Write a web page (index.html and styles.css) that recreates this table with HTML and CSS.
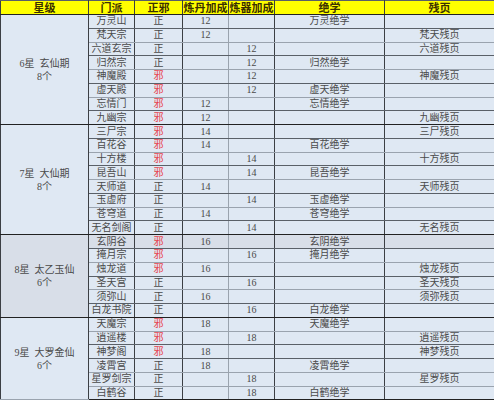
FILE: index.html
```html
<!DOCTYPE html>
<html>
<head>
<meta charset="utf-8">
<link rel="stylesheet" href="styles.css">
</head>
<body>
<table class="tbl">
  <colgroup>
    <col class="c1"><col class="c2"><col class="c3"><col class="c4"><col class="c5"><col class="c6"><col class="c7">
  </colgroup>
  <thead>
    <tr class="head"><th>星级</th><th>门派</th><th>正邪</th><th>炼丹加成</th><th>炼器加成</th><th>绝学</th><th>残页</th></tr>
  </thead>
  <tbody class="grp6">
    <tr><td class="grp" rowspan="8">6星&nbsp;&nbsp;玄仙期<br>8个</td><td>万灵山</td><td>正</td><td class="dan">12</td><td></td><td>万灵绝学</td><td></td></tr>
    <tr class="lt"><td>梵天宗</td><td>正</td><td class="dan">12</td><td></td><td></td><td>梵天残页</td></tr>
    <tr><td>六道玄宗</td><td>正</td><td class="dan"></td><td>12</td><td></td><td>六道残页</td></tr>
    <tr class="lt"><td>归然宗</td><td>正</td><td class="dan"></td><td>12</td><td>归然绝学</td><td></td></tr>
    <tr><td>神魔殿</td><td class="xie">邪</td><td class="dan"></td><td>12</td><td></td><td>神魔残页</td></tr>
    <tr class="lt"><td>虚天殿</td><td class="xie">邪</td><td class="dan"></td><td>12</td><td>虚天绝学</td><td></td></tr>
    <tr><td>忘情门</td><td class="xie">邪</td><td class="dan">12</td><td></td><td>忘情绝学</td><td></td></tr>
    <tr class="end"><td>九幽宗</td><td class="xie">邪</td><td class="dan">12</td><td></td><td></td><td>九幽残页</td></tr>
  </tbody>
  <tbody class="grp7">
    <tr><td class="grp" rowspan="8">7星&nbsp;&nbsp;大仙期<br>8个</td><td>三尸宗</td><td class="xie">邪</td><td class="dan">14</td><td></td><td></td><td>三尸残页</td></tr>
    <tr class="lt"><td>百花谷</td><td class="xie">邪</td><td class="dan">14</td><td></td><td>百花绝学</td><td></td></tr>
    <tr><td>十方楼</td><td class="xie">邪</td><td class="dan"></td><td>14</td><td></td><td>十方残页</td></tr>
    <tr class="lt"><td>昆吾山</td><td class="xie">邪</td><td class="dan"></td><td>14</td><td>昆吾绝学</td><td></td></tr>
    <tr><td>天师道</td><td>正</td><td class="dan">14</td><td></td><td></td><td>天师残页</td></tr>
    <tr class="lt"><td>玉虚府</td><td>正</td><td class="dan"></td><td>14</td><td>玉虚绝学</td><td></td></tr>
    <tr><td>苍穹道</td><td>正</td><td class="dan">14</td><td></td><td>苍穹绝学</td><td></td></tr>
    <tr class="end"><td>无名剑阁</td><td>正</td><td class="dan"></td><td>14</td><td></td><td>无名残页</td></tr>
  </tbody>
  <tbody class="grp8">
    <tr class="gray"><td class="grp" rowspan="6">8星&nbsp;&nbsp;太乙玉仙<br>6个</td><td>玄阴谷</td><td class="xie">邪</td><td class="dan">16</td><td></td><td>玄阴绝学</td><td></td></tr>
    <tr class="lt"><td>掩月宗</td><td class="xie">邪</td><td class="dan"></td><td>16</td><td>掩月绝学</td><td></td></tr>
    <tr><td>烛龙道</td><td class="xie">邪</td><td class="dan">16</td><td></td><td></td><td>烛龙残页</td></tr>
    <tr class="lt"><td>圣天宫</td><td>正</td><td class="dan"></td><td>16</td><td></td><td>圣天残页</td></tr>
    <tr><td>须弥山</td><td>正</td><td class="dan">16</td><td></td><td></td><td>须弥残页</td></tr>
    <tr class="end"><td>白龙书院</td><td>正</td><td class="dan"></td><td>16</td><td>白龙绝学</td><td></td></tr>
  </tbody>
  <tbody class="grp9">
    <tr class="lt"><td class="grp" rowspan="6">9星&nbsp;&nbsp;大罗金仙<br>6个</td><td>天魔宗</td><td class="xie">邪</td><td class="dan">18</td><td></td><td>天魔绝学</td><td></td></tr>
    <tr><td>逍遥楼</td><td class="xie">邪</td><td class="dan"></td><td>18</td><td></td><td>逍遥残页</td></tr>
    <tr><td>神梦阁</td><td class="xie">邪</td><td class="dan">18</td><td></td><td></td><td>神梦残页</td></tr>
    <tr class="lt"><td>凌霄宫</td><td>正</td><td class="dan">18</td><td></td><td>凌霄绝学</td><td></td></tr>
    <tr class="lt"><td>星罗剑宗</td><td>正</td><td class="dan"></td><td>18</td><td></td><td>星罗残页</td></tr>
    <tr class="end"><td>白鹤谷</td><td>正</td><td class="dan"></td><td>18</td><td>白鹤绝学</td><td></td></tr>
  </tbody>
</table>
</body>
</html>
```
FILE: styles.css
```css
html, body {
  margin: 0;
  padding: 0;
  background: #ffffff;
}
.tbl {
  width: 494px;
  height: 400px;
  table-layout: fixed;
  border-collapse: collapse;
  font-family: "Liberation Serif", "Noto Sans CJK SC", serif;
  font-size: 10px;
  color: #4a4a4a;
  background: #dfe8f3;
}
.c1 { width: 88px; }
.c2 { width: 46px; }
.c3 { width: 48px; }
.c4 { width: 46px; }
.c5 { width: 46px; }
.c6 { width: 110px; }
.c7 { width: 110px; }
.tbl th, .tbl td {
  padding: 0;
  text-align: center;
  vertical-align: middle;
  white-space: nowrap;
  overflow: hidden;
  line-height: 12px;
  border-left: 1px solid #3c3f44;
  border-right: 1px solid #3c3f44;
  border-top: 1px solid #5a6068;
  border-bottom: 1px solid #5a6068;
}
.tbl tr {
  height: 13.78px;
}
.tbl tr.head {
  height: 14px;
}
.head th {
  background: #ffff00;
  color: #3a3000;
  font-weight: bold;
  font-size: 11px;
  border-bottom: 1px solid #222;
}
.tbl tr.lt td {
  border-bottom-color: #9aa3ae;
}
.tbl td.dan {
  border-right-color: #9aa3ae;
}
.tbl tr.end td, .tbl td.grp {
  border-bottom: 1px solid #222;
}
.tbl td.grp {
  line-height: 13px;
}
.grp8 td.grp, .grp8 tr.gray td {
  background: #d8dee8;
}
.xie {
  color: #e8404a;
}
```
